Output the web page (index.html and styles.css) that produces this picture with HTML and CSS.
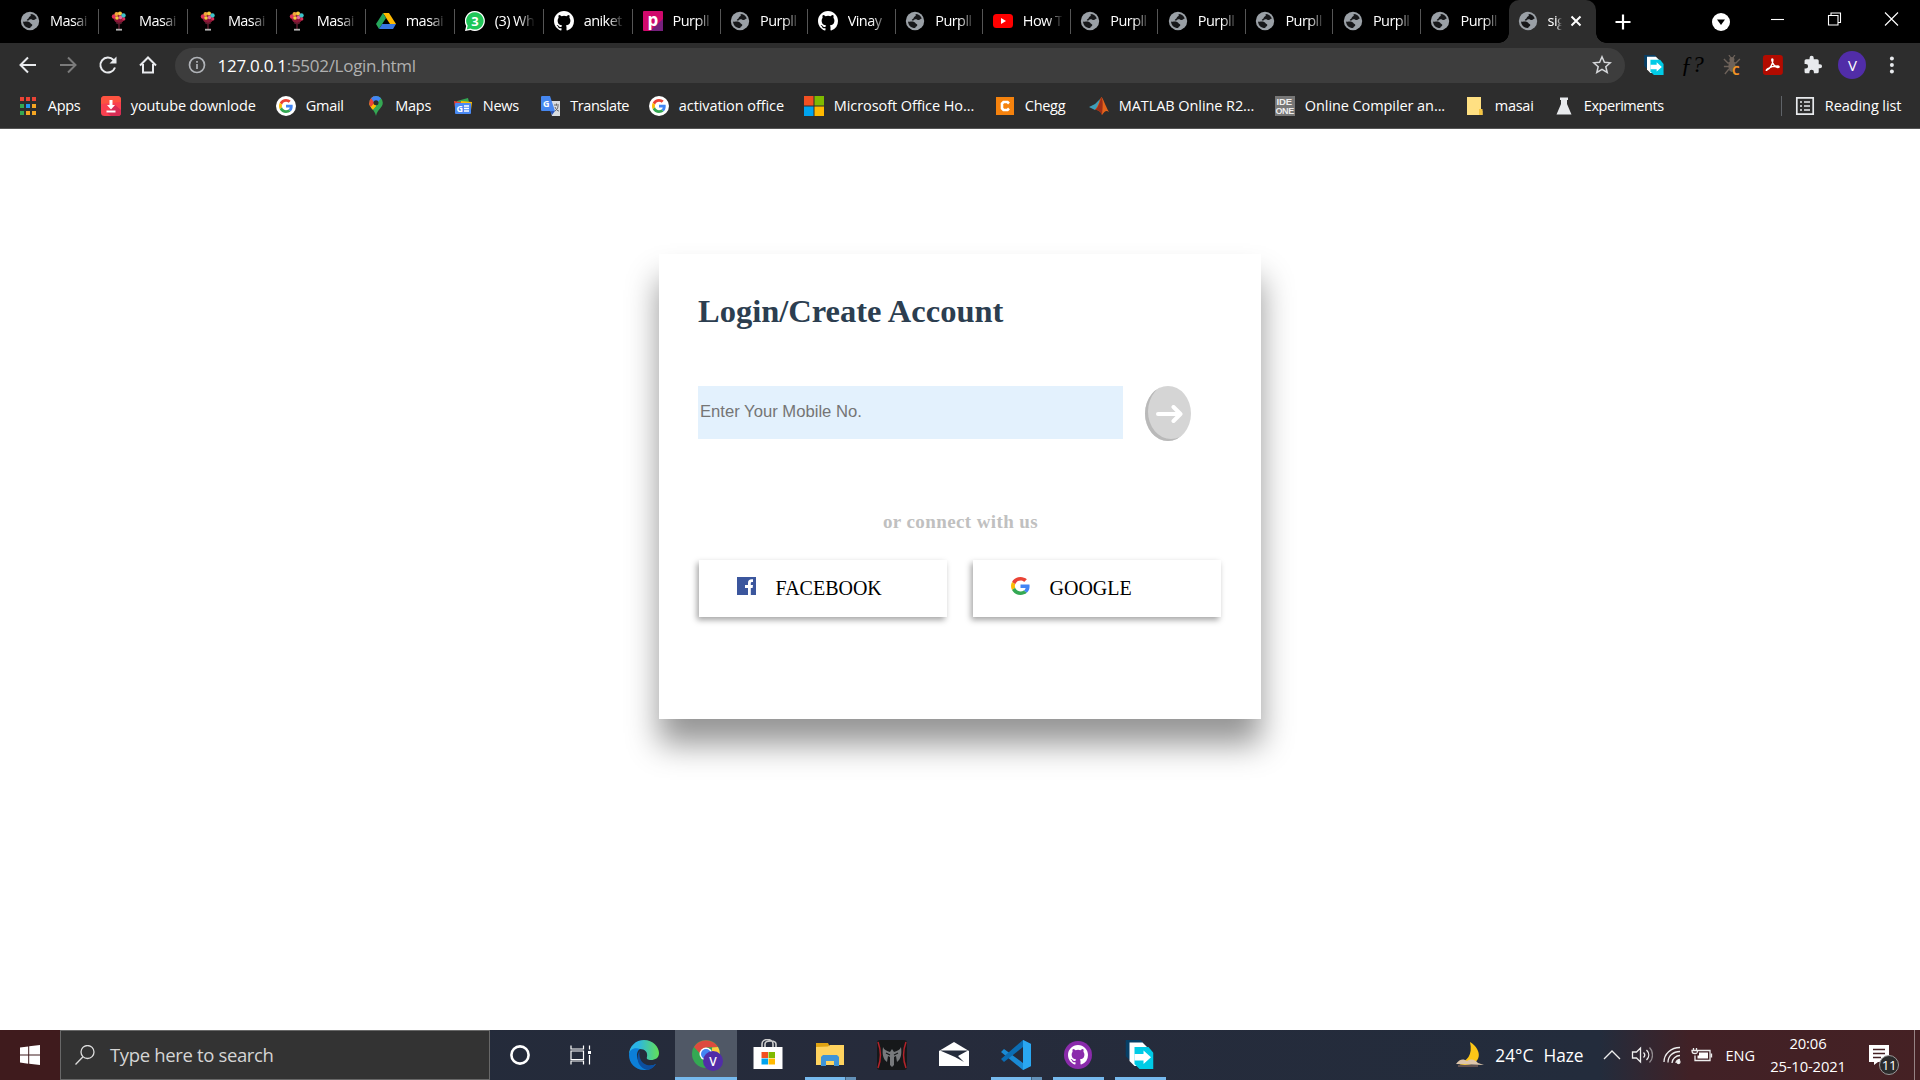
FILE: index.html
```html
<!DOCTYPE html>
<html lang="en">
<head>
<meta charset="utf-8">
<title>signup</title>
<link rel="stylesheet" href="styles.css">
</head>
<body>
<svg class="defs" aria-hidden="true">
  <symbol id="globe" viewBox="0 0 20 20"><circle cx="10" cy="10" r="9.200" fill="#9aa0a6"/><path fill="#17181a" d="M10.500 3c3 0 5.500 1.800 6.300 4.500-1.300.2-1.800 1.700-3.300 1.500-1.500-.2-1.800-1-3.300-.8-1.200.2-1.200 1.300-2.700 1.300-1 0-.9-1.200.2-1.600C9 7.400 8.500 6 9.800 5.500c1-.4 1.400-1.200.7-2.500zM3 10.500c2 .6 3.500-.3 5.500.2 1.800.4 1.700 1.800 3 2.300 1.300.5.900 2-.2 2.500-.8.400-.8 1-1.300 1.600C6 17 3.200 14.300 3 10.500z"/></symbol>
  <symbol id="balloon" viewBox="0 0 20 20"><circle cx="10" cy="6.500" r="5.500" fill="#8e1738"/><circle cx="5" cy="5.500" r="2.200" fill="#e0315a"/><circle cx="7.500" cy="3" r="2" fill="#f2a53a"/><circle cx="11" cy="2.500" r="2" fill="#f4cf3c"/><circle cx="14.500" cy="4.500" r="2.200" fill="#3cc4c9"/><circle cx="8" cy="7" r="1.800" fill="#f4cf3c"/><circle cx="11.500" cy="6.500" r="1.700" fill="#e86aa0"/><circle cx="14.800" cy="8" r="1.600" fill="#e0315a"/><path d="M7 11.500l3 1.500 3-1.500M10 12v6" stroke="#5d1c2e" stroke-width="1.400" fill="none"/><path d="M7 18.700h6" stroke="#b5b5b5" stroke-width="1.800"/></symbol>
  <symbol id="github" viewBox="0 0 16 16"><path fill="currentColor" d="M8 0C3.580 0 0 3.580 0 8c0 3.540 2.290 6.530 5.470 7.590.4.070.55-.17.55-.38 0-.19-.01-.82-.01-1.490-2.010.37-2.530-.49-2.690-.94-.09-.23-.48-.94-.82-1.130-.28-.15-.68-.52-.01-.53.630-.01 1.080.58 1.230.82.720 1.210 1.870.87 2.330.66.070-.52.280-.87.510-1.070-1.780-.2-3.640-.89-3.640-3.950 0-.87.310-1.590.82-2.150-.08-.2-.36-1.020.08-2.120 0 0 .67-.21 2.200.82a7.400 7.400 0 0 1 4 0c1.530-1.040 2.200-.82 2.200-.82.440 1.100.16 1.920.08 2.120.510.560.82 1.270.82 2.150 0 3.070-1.870 3.750-3.650 3.950.29.250.54.730.54 1.480 0 1.070-.01 1.930-.01 2.200 0 .21.150.46.550.38A8 8 0 0 0 16 8c0-4.420-3.580-8-8-8z"/></symbol>
  <symbol id="google" viewBox="0 0 48 48"><path fill="#ea4335" d="M24 9.500c3.540 0 6.710 1.220 9.210 3.600l6.850-6.850C35.900 2.380 30.470 0 24 0 14.620 0 6.510 5.380 2.560 13.220l7.980 6.190C12.430 13.720 17.740 9.500 24 9.500z"/><path fill="#4285f4" d="M46.980 24.550c0-1.570-.15-3.090-.38-4.550H24v9.020h12.940c-.58 2.960-2.260 5.480-4.780 7.180l7.730 6c4.510-4.180 7.090-10.360 7.090-17.650z"/><path fill="#fbbc05" d="M10.530 28.590A14.500 14.500 0 0 1 9.770 24c0-1.600.27-3.140.76-4.590l-7.980-6.190A23.900 23.900 0 0 0 0 24c0 3.880.92 7.540 2.560 10.780l7.970-6.190z"/><path fill="#34a853" d="M24 48c6.480 0 11.930-2.130 15.890-5.810l-7.730-6c-2.150 1.450-4.920 2.300-8.160 2.300-6.260 0-11.570-4.220-13.470-9.910l-7.980 6.190C6.510 42.620 14.620 48 24 48z"/></symbol>
  <symbol id="google-disc" viewBox="0 0 20 20"><circle cx="10" cy="10" r="10" fill="#fff"/><use href="#google" x="3" y="3" width="14" height="14"/></symbol>
  <symbol id="share" viewBox="0 0 28 29"><path d="M0 0h15l3 3v17H4l-4-4z" fill="#063f66"/><path d="M4 2.500h13l5 5V26H9l-5-5z" fill="#fff"/><path d="M9 7h14l5 6v16H14l-5-5z" fill="#00cbe6"/><path d="M9 14h9v-3.500l7.500 6.800-7.500 6.700v-3.500H9z" fill="#fff"/></symbol>
</svg>

<header class="browser">
  <div class="tab-strip">
    <nav class="tabs">
      <div class="tab wide"><svg class="icon"><use href="#globe"/></svg><span class="tab-title">Masai</span></div>
      <div class="tab wide"><svg class="icon"><use href="#balloon"/></svg><span class="tab-title">Masai</span></div>
      <div class="tab wide"><svg class="icon"><use href="#balloon"/></svg><span class="tab-title">Masai</span></div>
      <div class="tab wide"><svg class="icon"><use href="#balloon"/></svg><span class="tab-title">Masai</span></div>
      <div class="tab wide"><svg class="icon" viewBox="0 0 20 20"><path d="M7 2h6l7 11h-6z" fill="#ffba00"/><path d="M7 2l3 5-7 11-3-5z" fill="#25a65b"/><path d="M3 18l3.200-5H20l-3 5z" fill="#3777e3"/></svg><span class="tab-title">masai</span></div>
      <div class="tab wide"><svg class="icon" viewBox="0 0 20 20"><path d="M10 0a10 10 0 1 1-4.500 19L0 20l1.200-5A10 10 0 0 1 10 0z" fill="#fff"/><path d="M10 1.200a8.700 8.700 0 1 1-4.500 16.200l-3.800 1 1-3.600A8.700 8.700 0 0 1 10 1.200z" fill="#20c659"/><text x="10" y="15" text-anchor="middle" class="badge-number">3</text></svg><span class="tab-title">(3) Wh</span></div>
      <div class="tab wide"><svg class="icon"><use href="#github"/></svg><span class="tab-title">aniket</span></div>
      <div class="tab"><svg class="icon" viewBox="0 0 20 20"><rect width="20" height="20" rx="1" fill="#d0096c"/><path d="M20 8v12H7z" fill="#76207c"/><text x="10" y="14.500" text-anchor="middle" class="purplle-letter">p</text></svg><span class="tab-title">Purpll</span></div>
      <div class="tab"><svg class="icon"><use href="#globe"/></svg><span class="tab-title">Purpll</span></div>
      <div class="tab"><svg class="icon"><use href="#github"/></svg><span class="tab-title">Vinay</span></div>
      <div class="tab"><svg class="icon"><use href="#globe"/></svg><span class="tab-title">Purpll</span></div>
      <div class="tab"><svg class="icon" viewBox="0 0 20 20"><rect y="3" width="20" height="14" rx="3.500" fill="#f00"/><path d="M8 7l5 3-5 3z" fill="#fff"/></svg><span class="tab-title">How T</span></div>
      <div class="tab"><svg class="icon"><use href="#globe"/></svg><span class="tab-title">Purpll</span></div>
      <div class="tab"><svg class="icon"><use href="#globe"/></svg><span class="tab-title">Purpll</span></div>
      <div class="tab"><svg class="icon"><use href="#globe"/></svg><span class="tab-title">Purpll</span></div>
      <div class="tab"><svg class="icon"><use href="#globe"/></svg><span class="tab-title">Purpll</span></div>
      <div class="tab last"><svg class="icon"><use href="#globe"/></svg><span class="tab-title">Purpll</span></div>
      <div class="tab active"><svg class="icon"><use href="#globe"/></svg><span class="tab-title">sig</span><svg class="close" viewBox="0 0 12 12"><path d="M1.500 1.500l9 9m0-9l-9 9"/></svg></div>
    </nav>
    <svg class="new-tab" viewBox="0 0 16 16"><path d="M8 .5v15M.5 8h15"/></svg>
    <svg class="tab-search" viewBox="0 0 18 18"><circle cx="9" cy="9" r="9" fill="#fff"/><path d="M5 6.500h8L9 12z" fill="#000"/></svg>
    <div class="window-controls">
      <svg viewBox="0 0 14 14"><path d="M.5 7.500h13"/></svg>
      <svg viewBox="0 0 14 14"><path d="M1 3.500h9.500v9.500H1zM3.500 3.500V1h9.500v9.500h-2.500"/></svg>
      <svg viewBox="0 0 14 14"><path d="M.5.5l13 13m0-13l-13 13"/></svg>
    </div>
  </div>

  <div class="toolbar">
    <div class="nav-buttons">
      <svg viewBox="0 0 20 20"><path d="M18 10H3M10 2.500L2.500 10l7.500 7.500"/></svg>
      <svg class="disabled" viewBox="0 0 20 20"><path d="M2 10h15M10 2.500l7.500 7.500-7.500 7.500"/></svg>
      <svg viewBox="0 0 20 20"><path d="M17 12.500A7.500 7.500 0 1 1 15.500 5l2 2.500"/><path d="M18.500 1.500v7h-7z" fill="#e8eaed" stroke="none"/></svg>
      <svg viewBox="0 0 20 20"><path d="M2 10.500l8-8 8 8M5 9v8.500h10V9"/></svg>
    </div>
    <div class="address-bar">
      <svg class="info" viewBox="0 0 18 18"><circle cx="9" cy="9" r="7.500"/><path d="M9 8v5M9 5v1.800"/></svg>
      <span class="url"><span class="host">127.0.0.1</span>:5502/Login.html</span>
      <svg class="star" viewBox="0 0 20 20"><path d="M10 1.800l2.400 5.500 5.900.5-4.500 3.900 1.400 5.800-5.200-3.100-5.200 3.100 1.400-5.800L1.700 7.800l5.900-.5z"/></svg>
    </div>
    <div class="extensions">
      <svg class="ext"><use href="#share"/></svg>
      <span class="function-mark">ƒ?</span>
      <svg class="ext" viewBox="0 0 20 20"><g fill="#6d625a"><ellipse cx="9" cy="11" rx="3.500" ry="6"/><circle cx="9" cy="4.500" r="2.500"/></g><path d="M6 0l2 3M12 0l-2 3M1 4l4 4h8l4-4M1 11.500h15M2 19l4-5" fill="none" stroke="#6d625a" stroke-width="1.300"/><text x="9" y="19.500" class="bug-letter">C</text></svg>
      <svg class="ext" viewBox="0 0 20 20"><rect width="20" height="20" rx="3" fill="#b30b00"/><path d="M4 15c3-1 6-6 6-10 0-1.500-1.500-1.500-1 .5 1 4 3.500 6.500 6 7 1.800 0 1.500-1.500-.5-1.500-3 0-7 1-9.500 2.500C3 15 3 16 4 15z" fill="none" stroke="#fff" stroke-width="1.400"/></svg>
      <svg class="ext puzzle" viewBox="0 0 24 24"><path d="M20.500 11H19V7a2 2 0 0 0-2-2h-4V3.500a2.500 2.500 0 0 0-5 0V5H4a2 2 0 0 0-2 2v3.800h1.500a2.700 2.700 0 0 1 0 5.400H2V20c0 1.100.9 2 2 2h3.800v-1.500a2.700 2.700 0 0 1 5.400 0V22H17a2 2 0 0 0 2-2v-4h1.500a2.500 2.500 0 0 0 0-5z"/></svg>
      <span class="avatar">V</span>
      <svg class="ext" viewBox="0 0 20 20" fill="#e8eaed"><circle cx="10" cy="3.500" r="2"/><circle cx="10" cy="10" r="2"/><circle cx="10" cy="16.500" r="2"/></svg>
    </div>
  </div>

  <div class="bookmarks">
    <div class="bookmark-list">
      <a class="bookmark"><svg class="icon" viewBox="0 0 20 20"><path d="M2 1h4v4H2zM8 1h4v4H8zM14 1h4v4h-4z" fill="#ea4335"/><path d="M2 8h4v4H2zM2 15h4v4H2z" fill="#34a853"/><path d="M8 8h4v4H8z" fill="#2196f3"/><path d="M14 8h4v4h-4zM8 15h4v4H8zM14 15h4v4h-4z" fill="#f5a623"/></svg>Apps</a>
      <a class="bookmark snug"><svg class="icon" viewBox="0 0 20 20"><rect width="20" height="20" rx="3.500" fill="#f9404f"/><path d="M0 8V3.500C0 1.500 1.500 0 3.500 0h13C18.500 0 20 1.500 20 3.500V6z" fill="#fd5340"/><path d="M14 9l6 5v3c0 2-1 3-3 3h-7l-4.500-3.500z" fill="#d82c54"/><path d="M8.500 4h3v5H14l-4 4.500L6 9h2.500zM5.500 14.500h9v2h-9z" fill="#fff"/></svg>youtube downlode</a>
      <a class="bookmark"><svg class="icon"><use href="#google-disc"/></svg>Gmail</a>
      <a class="bookmark"><svg class="icon" viewBox="0 0 20 20"><defs><clipPath id="pin"><path d="M10 0a6.800 6.800 0 0 1 6.800 6.800C16.800 12 11.500 13 10 20 8.500 13 3.200 12 3.200 6.800A6.800 6.800 0 0 1 10 0z"/></clipPath></defs><g clip-path="url(#pin)"><path d="M0 0h20v20H0z" fill="#34a853"/><path d="M0 7h10v3l-6 6z" fill="#fbbc04"/><path d="M0 0h8l2 6-6 6-4-3z" fill="#ea4335"/><path d="M5 2l3-4h10l-8 11z" fill="#4285f4"/><path d="M0 14l5-3 5-6v5l-5 6z" fill="#fbbc04"/></g><circle cx="10" cy="6.800" r="2.500" fill="#2d2d2d"/></svg>Maps</a>
      <a class="bookmark"><svg class="icon" viewBox="0 0 20 20"><path d="M4 5l11-3 2 8H4z" fill="#34a853"/><path d="M1 5l13 2v5H2z" fill="#ea4335"/><path d="M8 5l11 1-1 8H8z" fill="#fbbc04"/><rect x="2" y="7" width="16" height="11" rx="1" fill="#4a8af4"/><path d="M11 10h5M11 12.500h5M11 15h5" stroke="#fff" stroke-width="1.300"/><text x="3.500" y="15.500" class="g-letter">G</text></svg>News</a>
      <a class="bookmark tight"><svg class="icon" viewBox="0 0 20 20"><path d="M7 5h12v15h-8z" fill="#d8dce0"/><path d="M1 0h8l5 15H1c-1 0-1-1-1-1V1c0-1 1-1 1-1z" fill="#4687ef"/><path d="M9 15h5l-3 4z" fill="#2b55b8"/><path d="M13 9h5M15.500 7.500v2M17 10c0 3-2 4-3 5m0-4c1 3 3 4 4 4" stroke="#666" fill="none"/><text x="2" y="11" class="g-letter">G</text></svg>Translate</a>
      <a class="bookmark roomy"><svg class="icon"><use href="#google-disc"/></svg>activation office</a>
      <a class="bookmark roomy"><svg class="icon" viewBox="0 0 20 20"><path d="M0 0h9.500v9.500H0z" fill="#f25022"/><path d="M10.500 0H20v9.500h-9.500z" fill="#7fba00"/><path d="M0 10.500h9.500V20H0z" fill="#00a4ef"/><path d="M10.500 10.500H20V20h-9.500z" fill="#ffb900"/></svg>Microsoft Office Ho...</a>
      <a class="bookmark"><svg class="icon" viewBox="0 0 20 20"><rect x="1" y="1" width="18" height="18" fill="#f5820d"/><path d="M14 7.500L12.500 6h-4L7 7.500v5L8.500 14h4l1.500-1.500" fill="none" stroke="#fff" stroke-width="2.600"/></svg>Chegg</a>
      <a class="bookmark roomy"><svg class="icon" viewBox="0 0 20 20"><path d="M0 11l6-3 5-5-1 6-4 5z" fill="#3e9db8"/><path d="M6 14c3-3 4-10 6.500-13C14 2 16 9 20 16c-3-2-4-1-7 3-1-3-3-5-7-5z" fill="#e2631b"/><path d="M12.500 1c2 4 1 12 .5 18-1-3-3-5-7-5 4-3 5-10 6.500-13z" fill="#9c2e19"/></svg>MATLAB Online R2...</a>
      <a class="bookmark roomy"><svg class="icon" viewBox="0 0 20 20"><rect width="20" height="20" fill="#777"/><text x="1.500" y="9" class="ide-letter">IDE</text><text x=".5" y="18" class="ide-letter one">ONE</text></svg>Online Compiler an...</a>
      <a class="bookmark"><svg class="icon" viewBox="0 0 20 20"><path d="M2 1h14v12l1.500 2v4H2z" fill="#ffe082"/><path d="M14 13h3.500v6H14z" fill="#f4c542"/></svg>masai</a>
      <a class="bookmark tight"><svg class="icon" viewBox="0 0 20 20"><path d="M6 1.500h8V4h-1v4l4.500 10.500h-15L7 8V4H6z" fill="#e8eaed"/></svg>Experiments</a>
    </div>
    <a class="bookmark roomy reading-list"><svg class="icon" viewBox="0 0 20 20"><path d="M1.800 1.800h16.400v16.400H1.800zM5 6h2M5 10h2M5 14h2M9 6h6M9 10h6M9 14h6" fill="none" stroke="#e8eaed" stroke-width="1.700"/></svg>Reading list</a>
  </div>
</header>

<main class="page">
  <section class="card">
    <h1 class="title">Login/Create Account</h1>
    <form class="mobile-form">
      <input class="mobile" type="text" placeholder="Enter Your Mobile No.">
      <button class="submit" type="button" aria-label="Continue"><svg viewBox="0 0 27 18"><path d="M2 9h22M17.500 2l7 7-7 7"/></svg></button>
    </form>
    <p class="divider">or connect with us</p>
    <div class="social">
      <button class="social-button" type="button"><svg viewBox="0 0 19 18" class="social-icon"><path d="M0 0h19v18H0z" fill="#3b569d"/><path d="M11 18v-7H8V8h3V6c0-3 1.500-4 5-3.700V5c-2 0-2.200.3-2.200 1.500V8H16l-.4 3h-1.800v7z" fill="#fff"/></svg>FACEBOOK</button>
      <button class="social-button" type="button"><svg class="social-icon" viewBox="0 0 48 48" preserveAspectRatio="none"><use href="#google" width="48" height="48"/></svg>GOOGLE</button>
    </div>
  </section>
</main>

<footer class="taskbar">
  <div class="start"><svg viewBox="0 0 20 20"><path d="M0 2.600l8.200-1.200v8.100H0zM9.200 1.300L20 0v9.500H9.200zM0 10.500h8.200v8.200L0 17.500zM9.200 10.500H20V20L9.200 18.800z" fill="#fff"/></svg></div>
  <div class="search"><svg viewBox="0 0 20 20"><circle cx="12.500" cy="7" r="6.500"/><path d="M8 11.800L.5 19.500"/></svg><span>Type here to search</span></div>
  <div class="task"><svg viewBox="0 0 32 32"><circle cx="16" cy="16" r="8.600" fill="none" stroke="#fff" stroke-width="2.600"/></svg></div>
  <div class="task view"><svg viewBox="0 0 32 32" fill="none" stroke="#fff" stroke-width="1.200"><path d="M6 6.500V10h12.500V6.500M6 25.500V22h12.500v3.500M6 12h12.500v8.500H6zM24.500 6.500v4M24.500 16v9.500"/><path d="M23 12h3v3h-3z" fill="#fff" stroke="none"/></svg></div>
  <div class="task"><svg viewBox="0 0 32 32"><defs><linearGradient id="edgeTop"><stop offset=".3" stop-color="#2bb5e5"/><stop offset="1" stop-color="#63df56"/></linearGradient></defs><path d="M1 16C1 7 8 1 16 1c9 0 15 7 15 13 0 5-4 7-8 7-3 0-5-1-4-3 1-5-2-8-7-8C6 10 1 13 1 16z" fill="url(#edgeTop)"/><path d="M1 16c0-5 5-8 11-6-3 2-4 6-2 11 2 6 10 8 18 4-4 5-8 6-12 6C7 31 1 24 1 16z" fill="#0c7fd8"/><path d="M12 12c-4 3-4 17 8 19 4-1 6-3 8-6-6 3-14 1-16-6-.5-3-1-5 0-7z" fill="#0c4fa0"/></svg></div>
  <div class="task current"><svg viewBox="0 0 32 32"><circle cx="15" cy="15" r="14" fill="#34a853"/><path d="M3 8a14 14 0 0 1 24 0l-12 .5-6 6z" fill="#dd4b3e"/><path d="M27 8a14 14 0 0 1-11 21l5-11V8.500z" fill="#ffcd40"/><circle cx="15" cy="15" r="6.500" fill="#fff"/><circle cx="15" cy="15" r="5" fill="#4285f4"/><circle cx="22" cy="22" r="10" fill="#512da8"/><text x="22" y="26.500" text-anchor="middle" class="profile-letter">V</text></svg></div>
  <div class="task"><svg viewBox="0 0 32 32"><path d="M10 9V5c0-6 11-6 11 0v4M13 9V5c0-4 11-4 11 0v4" fill="none" stroke="#ccc" stroke-width="1.600"/><path d="M1.500 8h29v22h-29z" fill="#fff"/><path d="M9.500 13H16v6H9.500z" fill="#f25022"/><path d="M16.500 13H23v6h-6.500z" fill="#7fba00"/><path d="M9.500 19.500H16v6H9.500z" fill="#00a4ef"/><path d="M16.500 19.500H23v6h-6.500z" fill="#ffb900"/></svg></div>
  <div class="task open stacked"><svg viewBox="0 0 32 32"><path d="M2 4h12l2 4H2z" fill="#e0a312"/><path d="M2 8l12-.5 2-1.500h14v20H2z" fill="#ffd35f"/><path d="M7 27v-9l2-2h14l2 2v9h-5v-5h-8v5z" fill="#3f94d8"/></svg></div>
  <div class="task"><svg viewBox="0 0 32 32"><rect x="1" y="1" width="30" height="30" rx="3" fill="#16181a"/><path d="M2 3c3 8 3 18 0 26M30 3c-3 8-3 18 0 26" fill="none" stroke="#b3232b" stroke-width="1.500"/><path d="M7 8c1 3 4 4 7 5l2-3 2 3c3-1 6-2 7-5 1 7 0 12-4 15l-1-6-2 1v8l-2 2-2-2v-8l-2-1-1 6c-4-3-5-8-4-15z" fill="#77797c"/><path d="M10 14l4 2M22 14l-4 2" stroke="#16181a" stroke-width="1.200"/></svg></div>
  <div class="task"><svg viewBox="0 0 32 32"><path d="M1 12l15-9 15 9v15H1z" fill="#fff"/><path d="M2 11.500h28l-10 5.500 6 6-9-5z" fill="#232b3b"/></svg></div>
  <div class="task open stacked"><svg viewBox="0 0 32 32"><path d="M23 1l8 4v22l-8 4L1 13l3-3 19 14z" fill="#1a8ad4"/><path d="M1 20l3 3L23 8V1z" fill="#0b6db4"/><path d="M23 1l8 4v22l-8 4z" fill="#2aa7f1"/></svg></div>
  <div class="task open"><svg viewBox="0 0 32 32" color="#fff"><circle cx="16" cy="16" r="14" fill="#8a2bab"/><use href="#github" x="6" y="6" width="20" height="20"/></svg></div>
  <div class="task open"><svg viewBox="0 0 32 32"><use href="#share" x="1.500" y="1" width="28" height="29"/></svg></div>

  <div class="weather"><svg viewBox="0 0 30 26"><path d="M15 0c13 8 12 23-5 23-4 0-6-1-7-2C12 20 18 13 15 0z" fill="#fdc617"/><path d="M1 22c4-6 8-5 11-3 5-3 8-1 11 2l6 2z" fill="#ddc5aa"/><path d="M3 24h20" stroke="#9d7766"/></svg><span>24°C</span><span>Haze</span></div>
  <div class="tray">
    <svg viewBox="0 0 22 22"><path d="M3 15l8-8 8 8"/></svg>
    <svg viewBox="0 0 22 22"><path d="M1.500 8h4l4-4v14l-4-4h-4zM12.500 8.500c1.500 1.500 1.500 3.500 0 5M15.500 6c3 3 3 7 0 10"/><path d="M18.500 3.500c4 4 4 11 0 15" opacity=".5"/></svg>
    <svg viewBox="0 0 22 22"><path d="M3 18C3 10 10 3.500 19 3.500M7 18.500C7 12 12 7.500 19 7.500M11 19c0-4 4-7.500 8-7.500M15 19c0-2 2-3.500 4-3.500"/><circle cx="17.500" cy="18" r="1.500" fill="#fff"/></svg>
    <svg viewBox="0 0 22 22"><path d="M6.500 6.500h12.500v10H4v-5M2.500 4v2M5.500 4v2M1 6.500h5.500c0 3-1 3-2.500 3S1 9.500 1 6.500zM20.500 9.500v4"/><path d="M8 8.500h9v6H6.500v-3H8z" fill="#fff" stroke="none"/></svg>
  </div>
  <span class="language">ENG</span>
  <div class="clock"><span>20:06</span><span>25-10-2021</span></div>
  <div class="notifications"><svg viewBox="0 0 20 20"><path d="M0 0h20v17H9l-4 3v-3H0z" fill="#fff"/><path d="M4 4.500h12M4 8.500h12M4 12.500h8" stroke="#452124" stroke-width="1.300"/></svg><span class="count">11</span></div>
</footer>
</body>
</html>
```
FILE: styles.css
```css
* { box-sizing: border-box; }
body {
  margin: 0;
  width: 1920px;
  height: 1080px;
  display: flex;
  flex-direction: column;
  overflow: hidden;
  background: #fff;
  font-family: "Open Sans", "Noto Sans", sans-serif;
}
.defs { position: absolute; width: 0; height: 0; }
.icon { width: 20px; height: 20px; flex: none; }
svg { display: block; }

/* Browser window */
.browser { height: 129px; background: #2d2d2d; color: #fff; border-bottom: 1px solid #555; }
.tab-strip { height: 43px; background: #000; display: flex; align-items: center; }
.tabs { display: flex; align-items: flex-end; height: 43px; padding-left: 10.5px; }
.tab { width: 87.55px; height: 43px; display: flex; align-items: center; gap: 10px; padding: 0 9px 2px 9.5px; background: linear-gradient(#555, #555) right 9px / 1px 25px no-repeat; }
.tab.wide { width: 88.95px; }
.tab.last { background: none; }
.tab-title { flex: 1; white-space: nowrap; font-size: 14.5px; letter-spacing: -.55px; -webkit-mask-image: linear-gradient(90deg, #000 24px, transparent 40px); mask-image: linear-gradient(90deg, #000 24px, transparent 40px); }
.tab.active { position: relative; background: #2d2d2d; border-radius: 10px 10px 0 0; padding-left: 9px; }
.tab.active::before, .tab.active::after { content: ""; position: absolute; bottom: 0; width: 10px; height: 10px; }
.tab.active::before { left: -10px; background: radial-gradient(circle at 0 0, transparent 9.5px, #2d2d2d 10px); }
.tab.active::after { right: -10px; background: radial-gradient(circle at 100% 0, transparent 9.5px, #2d2d2d 10px); }
.tab.active .tab-title { flex: none; width: 20px; margin-right: -8px; -webkit-mask-image: linear-gradient(90deg, #000 8px, transparent 14px); mask-image: linear-gradient(90deg, #000 8px, transparent 14px); }
.close { width: 12px; height: 12px; fill: none; stroke: #fff; stroke-width: 2; }
.new-tab { width: 16px; height: 16px; margin-left: 19px; fill: none; stroke: #fff; stroke-width: 2.2; }
.tab-search { width: 18px; height: 18px; margin-left: 81px; }
.window-controls { display: flex; margin-left: auto; padding-bottom: 6px; }
.window-controls svg { width: 57px; height: 14px; fill: none; stroke: #fff; stroke-width: 1.1; }

.toolbar { height: 45px; display: flex; align-items: center; padding-bottom: 1px; }
.nav-buttons { display: flex; width: 175px; padding-left: 7.5px; }
.nav-buttons svg { width: 40px; height: 20px; fill: none; stroke: #e8eaed; stroke-width: 2; }
.nav-buttons .disabled { stroke: #7b7b7b; }
.address-bar { width: 1450px; height: 35px; border-radius: 18px; background: #3d3d3d; display: flex; align-items: center; padding: 0 13px; }
.info { width: 18px; height: 18px; fill: none; stroke: #b0b3b8; stroke-width: 1.7; }
.url { flex: 1; margin-left: 11.5px; font-size: 17px; letter-spacing: -.28px; color: #b0b0b0; }
.host { color: #fff; }
.star { width: 20px; height: 20px; fill: none; stroke: #d5d7da; stroke-width: 1.5; }
.extensions { display: flex; align-items: center; padding-left: 8.5px; }
.ext { width: 39.8px; height: 20px; }
.puzzle { fill: #e8eaed; }
.function-mark { width: 39.8px; text-align: center; color: #000; font: italic 23px/24px "Liberation Serif", serif; padding-right: 2px; }
.avatar { width: 28px; height: 28px; margin: 0 5.9px; border-radius: 50%; background: #512da8; text-align: center; font-size: 15px; line-height: 28px; }
.badge-number { font: bold 13px "Open Sans", sans-serif; fill: #fff; }
.purplle-letter { font: bold 17px "Open Sans", sans-serif; fill: #fff; }
.bug-letter { font: bold 12px "Open Sans", sans-serif; fill: #f39325; }
.g-letter { font: bold 9px "Open Sans", sans-serif; fill: #fff; }
.ide-letter { font: bold 9.5px "Liberation Sans", sans-serif; fill: #eee; }
.ide-letter.one { font-size: 9px; letter-spacing: -.4px; }
.profile-letter { font: 600 12px "Open Sans", sans-serif; fill: #fff; }

.bookmarks { height: 40px; padding: 0 18px 3.5px; display: flex; justify-content: space-between; align-items: center; }
.bookmark-list { display: grid; grid-template-columns: 83px 175px 89.5px 87.5px 87.5px 108.5px 155px 191px 94px 186px 190px 89px 115px; }
.bookmark { display: flex; align-items: center; gap: 9.8px; white-space: nowrap; font-size: 14.5px; line-height: 20px; letter-spacing: -.28px; }
.bookmark.roomy { letter-spacing: -.08px; }
.bookmark.snug { letter-spacing: -.12px; }
.bookmark.tight { letter-spacing: -.45px; }
.reading-list { border-left: 1px solid #5f6368; padding-left: 13px; width: 121px; }

/* Login page */
.page { flex: 1; display: flex; justify-content: center; align-items: flex-start; padding-top: 125px; }
.card { width: 602px; height: 465px; padding: 38px 38px 0 39px; background: #fff; box-shadow: 0 25px 30px rgba(0, 0, 0, .42); font-family: "Liberation Serif", serif; }
.title { margin: 0; font-size: 32.5px; line-height: 38px; color: #2c3e50; }
.mobile-form { display: flex; align-items: flex-start; gap: 22px; height: 56px; margin-top: 56px; }
.mobile { width: 425px; height: 53px; border: 0; padding: 0 2px 2px; background: #e3f1fd; font: 16.65px "Liberation Sans", sans-serif; }
.mobile::placeholder { color: #757575; opacity: 1; }
.submit { width: 46px; height: 55px; padding: 0 0 0 2px; border: 0; border-radius: 50%; background: #d5d5d5; box-shadow: inset 3px -2px 0 #b9b9b9; display: flex; justify-content: center; align-items: center; }
.submit svg { width: 27px; height: 18px; fill: none; stroke: #fff; stroke-width: 4; stroke-linecap: round; stroke-linejoin: round; }
.divider { margin: 69px 0 0; text-align: center; font-size: 19px; letter-spacing: .4px; line-height: 22px; font-weight: bold; color: #c0c0c0; }
.social { display: flex; gap: 26px; margin: 27px 0 0 1px; }
.social-button { width: 248px; height: 57px; padding: 0 0 0 38px; border: 0; background: #fff; box-shadow: -2px 3px 6px rgba(0, 0, 0, .36); display: flex; align-items: center; gap: 19.5px; font: 20px "Liberation Serif", serif; color: #000; }
.social-icon { width: 19px; height: 18px; margin-bottom: 5px; }

/* Desktop taskbar */
.taskbar { height: 50px; display: flex; align-items: center; color: #fff; background: linear-gradient(90deg, #222b3a 0, #262b3b 900px, #232c3c 1600px, #412126 1690px, #452124 100%); }
.start { width: 60px; height: 50px; display: grid; place-items: center; background: #3f1b1d; }
.start svg { width: 20px; height: 20px; }
.search { width: 430px; height: 50px; display: flex; align-items: center; gap: 15px; padding: 0 0 1px 14px; margin-right: -1px; background: #333; border: 1px solid #686868; color: #d5d5d5; font-size: 18.5px; letter-spacing: -.35px; }
.search svg { width: 20px; height: 20px; fill: none; stroke: #ddd; stroke-width: 1.3; }
.task { position: relative; width: 62px; height: 50px; flex: none; display: grid; place-items: center; }
.task svg { width: 32px; height: 32px; }
.view { padding-right: 2px; }
.current { background: #505866; border-bottom: 3px solid #76b9ed; padding: 3px 0 0 2px; }
.open { background: linear-gradient(#76b9ed, #76b9ed) center bottom / 51px 3px no-repeat; }
.stacked { background: linear-gradient(90deg, #76b9ed 40px, #40627f 40px, #40627f 41px, #6391b8 41px) center bottom / 51px 3px no-repeat; }
.weather { display: flex; align-items: center; gap: 10px; margin-left: auto; font-size: 17.3px; }
.weather svg { width: 30px; height: 26px; }
.tray { display: flex; align-items: center; margin-left: 17px; gap: 8.3px; }
.tray svg { width: 22px; height: 22px; fill: none; stroke: #eee; stroke-width: 1.3; }
.language { margin-left: 12px; font-size: 14.5px; }
.clock { width: 78px; margin-left: 14px; display: flex; flex-direction: column; align-items: center; font-size: 14.8px; line-height: 23px; letter-spacing: -.15px; }
.notifications { position: relative; margin: 0 5px 0 22px; width: 46px; height: 50px; padding-top: 15px; border-right: 1px solid #968384; }
.notifications svg { width: 20px; height: 20px; }
.count { position: absolute; left: 10px; top: 25px; width: 20px; height: 20px; border-radius: 50%; border: 1px solid #999; background: #2b2b2b; font-size: 13.5px; line-height: 18px; text-align: center; letter-spacing: -.5px; }
```
